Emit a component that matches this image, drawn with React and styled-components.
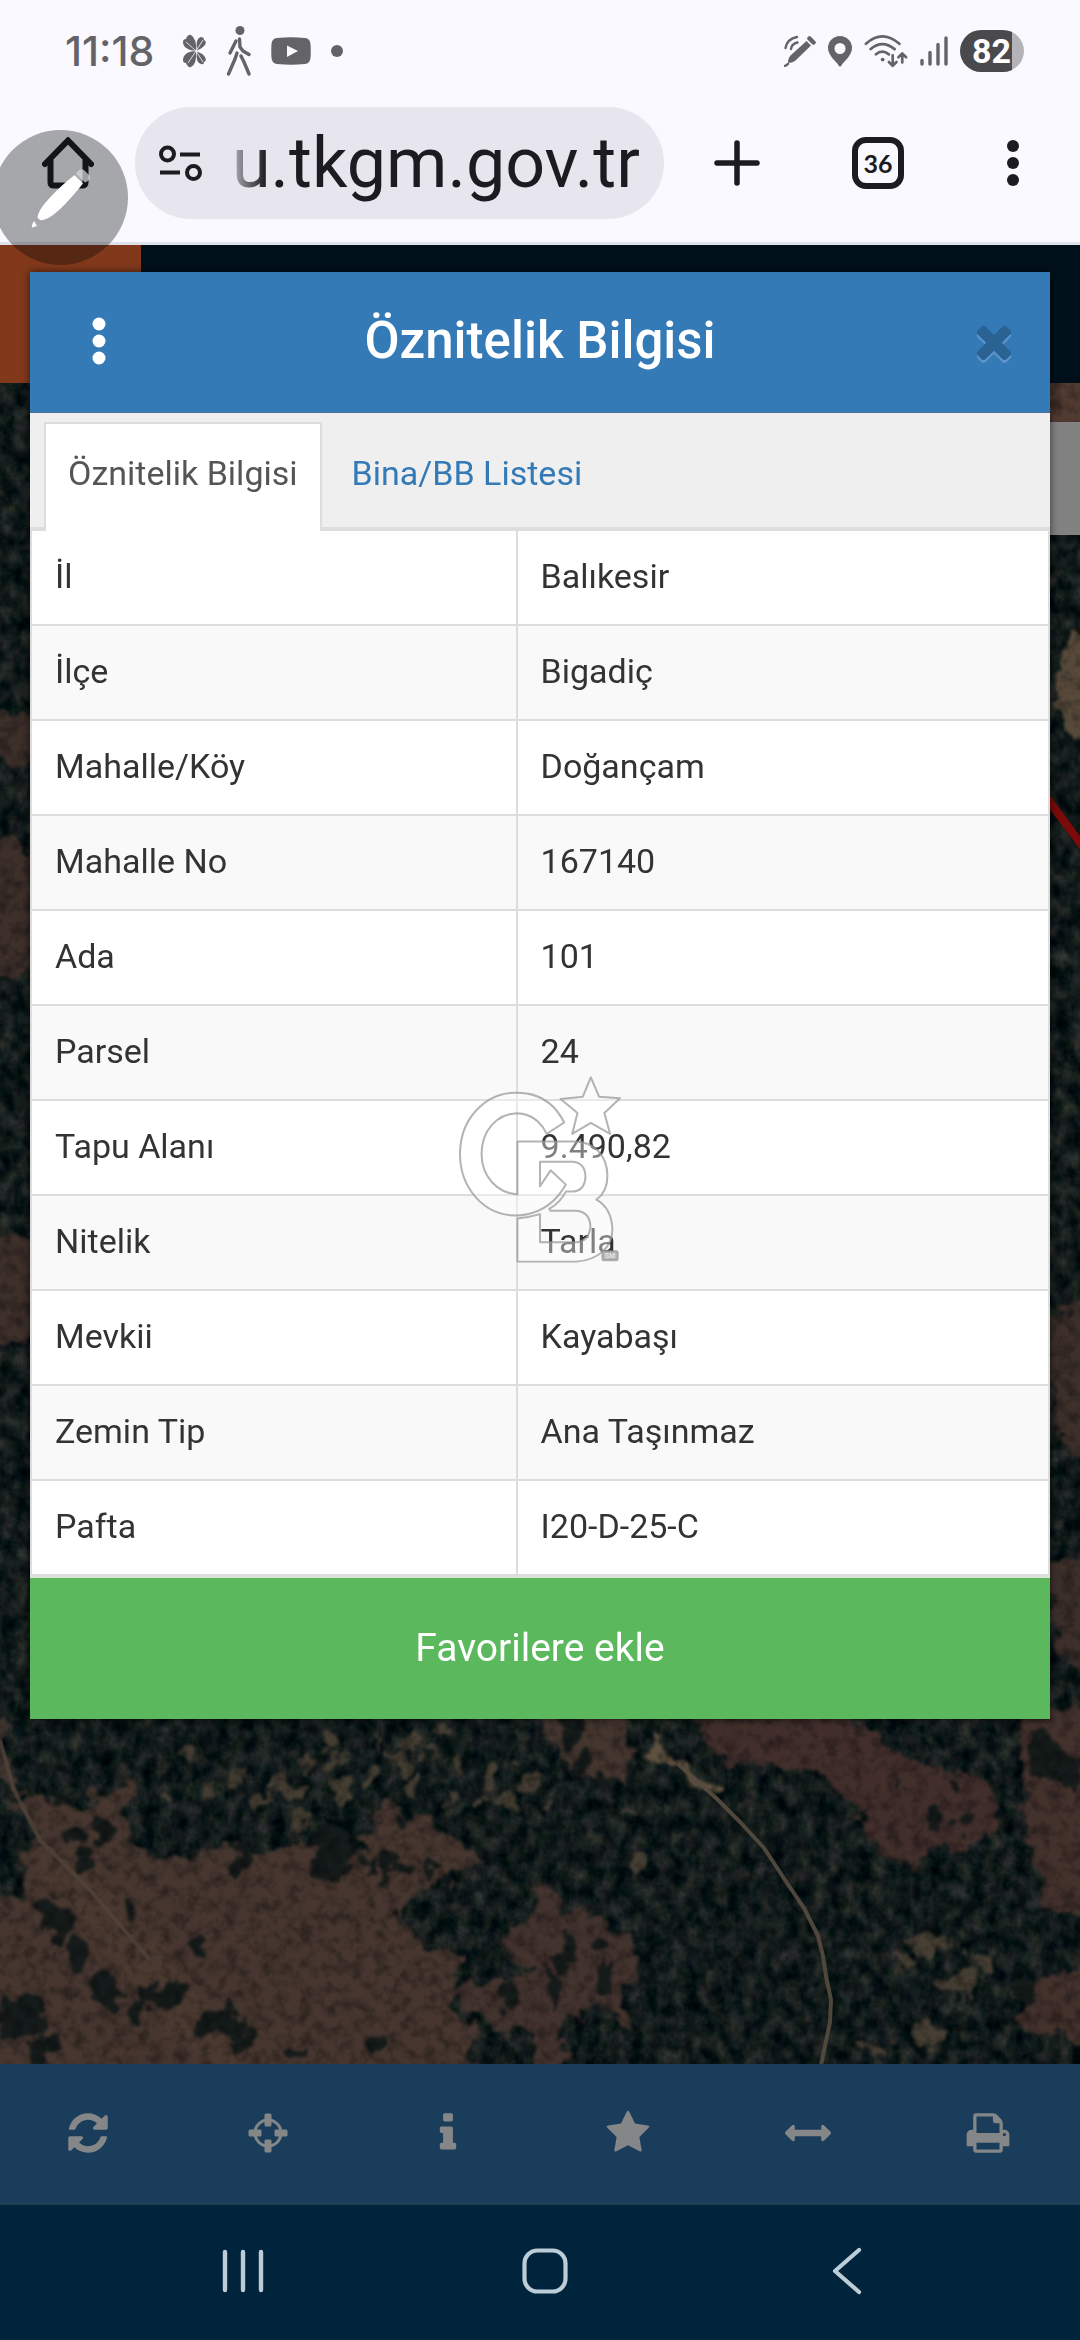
import React from "react";
import styled, { createGlobalStyle } from "styled-components";

const GlobalStyle = createGlobalStyle`
  *, *::before, *::after { box-sizing: border-box; }
  body {
    margin: 0;
    background: #00243c;
    font-family: Roboto, "Liberation Sans", sans-serif;
  }
  button, input { font: inherit; color: inherit; }
  svg { display: block; flex: none; }
`;

const Screen = styled.div`
  position: relative;
  display: flex;
  flex-direction: column;
  min-height: 100vh;
  overflow: hidden;
`;

const IconButton = styled.button`
  display: flex;
  align-items: center;
  justify-content: center;
  padding: 0;
  border: 0;
  background: none;
  cursor: pointer;
`;

/* ---------- phone status bar ---------- */

const StatusBar = styled.div`
  display: flex;
  align-items: center;
  justify-content: space-between;
  height: 84px;
  padding: 18px 56px 0 65px;
  background: #faf9ff;
  color: #646468;
`;

const StatusGroup = styled.div`
  display: flex;
  align-items: center;
  gap: ${(p) => p.$gap}px;
`;

const Clock = styled.time`
  padding-right: 8px;
  font: 500 41px/50px Inter, Roboto, sans-serif;
`;

const Battery = styled.div`
  width: 64px;
  height: 42px;
  padding-left: 12px;
  border-radius: 21px;
  background: linear-gradient(90deg, #4a4a4c 52px, #b4b3b8 52px);
  color: #fff;
  font-size: 34px;
  font-weight: 700;
  line-height: 42px;
`;

/* ---------- browser bar ---------- */

const BrowserBar = styled.header`
  display: flex;
  align-items: center;
  height: 161px;
  border-bottom: 3px solid #dfe2ea;
  background: #faf9ff;
  color: #1b1b20;
`;

const BarButton = styled(IconButton)`
  flex: none;
  width: ${(p) => p.$width}px;
  height: 112px;
`;

const AddressPill = styled.label`
  display: flex;
  flex: 1;
  align-items: center;
  gap: 24px;
  min-width: 0;
  height: 112px;
  padding: 0 8px 0 24px;
  border-radius: 56px;
  background: #e7e5ee;
`;

const AddressInput = styled.input`
  flex: 1;
  min-width: 0;
  height: 96px;
  padding: 0 0 0 6px;
  border: 0;
  outline: 0;
  background: none;
  font-size: 70px;
  line-height: 96px;
  mask-image: linear-gradient(90deg, rgba(0, 0, 0, 0.3) 8px, #000 40px);
`;

const TabCount = styled.span`
  display: flex;
  align-items: center;
  justify-content: center;
  width: 52px;
  height: 52px;
  border: 6px solid #1b1b20;
  border-radius: 14px;
  font: 700 25px/28px Lato, Roboto, sans-serif;
`;

const PenBubble = styled(IconButton)`
  position: absolute;
  top: 130px;
  left: -7px;
  width: 135px;
  height: 135px;
  border-radius: 50%;
  background: rgba(4, 8, 8, 0.34);
`;

/* ---------- map page ---------- */

const Page = styled.main`
  display: grid;
  flex: 1;
  grid-template: minmax(0, 1fr) / minmax(0, 1fr);
`;

const Backdrop = styled.div`
  display: flex;
  flex-direction: column;
  grid-area: 1 / 1;
`;

const SiteHeader = styled.div`
  height: 138px;
  background: linear-gradient(90deg, #82391b 141px, #00101b 141px);
`;

const MapArea = styled.div`
  position: relative;
  flex: 1;
  overflow: hidden;
  background: #151e1d;
`;

const MapPicture = styled.svg`
  position: absolute;
  inset: 0;
  width: 100%;
  height: 100%;
`;

const SidePanelHandle = styled.div`
  position: absolute;
  top: 39px;
  right: 0;
  width: 120px;
  height: 113px;
  background: #828282;
`;

/* ---------- dialog ---------- */

const Dialog = styled.section`
  z-index: 1;
  grid-area: 1 / 1;
  align-self: start;
  margin: 27px 30px 0;
  background: #fff;
  box-shadow: 0 0 8px rgba(0, 0, 0, 0.6);
  color: #333;
  font-size: 34px;
  line-height: 47px;
`;

const DialogHeader = styled.div`
  display: grid;
  grid-template-columns: 1fr auto 1fr;
  align-items: center;
  height: 141px;
  padding: 0 30px 2px;
  border-bottom: 1px solid #4a7396;
  background: #337ab7;
  color: #fff;
`;

const DialogTitle = styled.h1`
  margin: 0;
  font-size: 51px;
  font-weight: 500;
  line-height: 60px;
`;

const HeaderButton = styled(IconButton)`
  justify-self: ${(p) => p.$side};
  width: ${(p) => p.$width}px;
  height: 60px;
`;

const TabList = styled.div`
  display: flex;
  gap: 6px;
  height: 116px;
  padding: 9px 14px 0;
  border-bottom: 2px solid #ddd;
  background: #efefef;
`;

const Tab = styled.button`
  height: 109px;
  padding: 0 22px 8px;
  border: 2px solid ${(p) => (p.$active ? "#ddd" : "transparent")};
  border-bottom: 0;
  background: ${(p) => (p.$active ? "#fff" : "none")};
  color: ${(p) => (p.$active ? "#555" : "#337ab7")};
  cursor: pointer;
`;

const InfoTable = styled.table`
  width: 100%;
  border-collapse: collapse;
  table-layout: fixed;
`;

const InfoRow = styled.tr`
  &:nth-child(even) { background: #f9f9f9; }
`;

const cell = `
  padding: 22px 23px 24px;
  border: 2px solid #ddd;
  font-weight: 400;
  text-align: left;
`;

const NameCell = styled.th`
  ${cell}
  width: 47.7%;
`;

const ValueCell = styled.td`
  ${cell}
`;

const FavoriteButton = styled.button`
  display: block;
  width: 100%;
  height: 143px;
  padding: 0;
  border: 0;
  border-top: 2px solid #d9e5d2;
  background: #5cb85c;
  color: #fff;
  font-size: 39px;
  cursor: pointer;
`;

const Watermark = styled.svg`
  position: absolute;
  z-index: 2;
  top: 50%;
  left: 50%;
  width: 162px;
  height: 188px;
  transform: translate(-50%, -50%);
  pointer-events: none;
`;

/* ---------- bottom bars ---------- */

const MapToolbar = styled.nav`
  display: grid;
  grid-template-columns: repeat(6, 1fr);
  height: 141px;
  border-bottom: 3px solid #1d4257;
  background: #1a3d5c;
  color: #858687;
`;

const ToolButton = styled(IconButton)`
  padding-right: 5px;
`;

const PhoneNav = styled.nav`
  display: grid;
  grid-template-columns: repeat(3, 302px);
  justify-content: center;
  height: 135px;
  padding: 0 0 4px 10px;
  background: #00243c;
  color: #bccdd8;
`;

/* ---------- drawings ---------- */

const AwesomeIcon = ({ size, d, ...rest }) => (
  <svg width={size} height={size} viewBox="0 0 1792 1792" fill="currentColor" aria-hidden="true" {...rest}>
    <path d={d} />
  </svg>
);

const PATHS = {
  refresh:
    "M1639 1056q0 5-1 7-64 268-268 434.5t-478 166.5q-146 0-282.5-55t-243.5-157l-129 129q-19 19-45 19t-45-19-19-45v-448q0-26 19-45t45-19h448q26 0 45 19t19 45-19 45l-137 137q71 66 161 102t187 36q134 0 250-65t186-179q11-17 53-117 8-23 30-23h192q13 0 22.5 9.5t9.5 22.5zm25-800v448q0 26-19 45t-45 19h-448q-26 0-45-19t-19-45 19-45l138-138q-148-137-349-137-134 0-250 65t-186 179q-11 17-53 117-8 23-30 23h-199q-13 0-22.5-9.5t-9.5-22.5v-7q65-268 270-434.5t480-166.5q146 0 284 55.5t245 156.5l130-129q19-19 45-19t45 19 19 45z",
  info: "M1216 1344v128q0 26-19 45t-45 19h-512q-26 0-45-19t-19-45v-128q0-26 19-45t45-19h64v-384h-64q-26 0-45-19t-19-45v-128q0-26 19-45t45-19h384q26 0 45 19t19 45v576h64q26 0 45 19t19 45zm-128-1152v192q0 26-19 45t-45 19h-256q-26 0-45-19t-19-45v-192q0-26 19-45t45-19h256q26 0 45 19t19 45z",
  star: "M1728 647q0 22-26 48l-363 354 86 500q1 7 1 20 0 21-10.5 35.5t-30.5 14.5q-19 0-40-12l-449-236-449 236q-22 12-40 12-21 0-31.5-14.5t-10.5-35.5q0-6 2-20l86-500-364-354q-25-27-25-48 0-37 56-46l502-73 225-455q19-41 49-41t49 41l225 455 502 73q56 9 56 46z",
  arrows:
    "M1792 896q0 26-19 45l-256 256q-19 19-45 19t-45-19-19-45v-128h-1024v128q0 26-19 45t-45 19-45-19l-256-256q-19-19-19-45t19-45l256-256q19-19 45-19t45 19 19 45v128h1024v-128q0-26 19-45t45-19 45 19l256 256q19 19 19 45z",
  print:
    "M448 1536h896v-256h-896v256zm0-640h896v-384h-160q-40 0-68-28t-28-68v-160h-640v640zm1152 64q0-26-19-45t-45-19-45 19-19 45 19 45 45 19 45-19 19-45zm128 0v416q0 13-9.5 22.5t-22.5 9.5h-224v160q0 40-28 68t-68 28h-960q-40 0-68-28t-28-68v-160h-224q-13 0-22.5-9.5t-9.5-22.5v-416q0-79 56.5-135.5t135.5-56.5h64v-544q0-40 28-68t68-28h672q40 0 88 20t76 48l152 152q28 28 48 76t20 88v256h64q79 0 135.5 56.5t56.5 135.5z",
  times:
    "M1490 1322q0 40-28 68l-136 136q-28 28-68 28t-68-28l-294-294-294 294q-28 28-68 28t-68-28l-136-136q-28-28-28-68t28-68l294-294-294-294q-28-28-28-68t28-68l136-136q28-28 68-28t68 28l294 294 294-294q28-28 68-28t68 28l136 136q28 28 28 68t-28 68l-294 294 294 294q28 28 28 68z",
};

const CrosshairIcon = () => (
  <svg width="40" height="40" viewBox="0 0 40 40" aria-hidden="true">
    <circle cx="20" cy="20" r="13" fill="none" stroke="currentColor" strokeWidth="3" />
    <g fill="currentColor">
      <rect x="16.5" y="0.5" width="7" height="13" rx="1.5" />
      <rect x="16.5" y="26.5" width="7" height="13" rx="1.5" />
      <rect x="0.5" y="16.5" width="13" height="7" rx="1.5" />
      <rect x="26.5" y="16.5" width="13" height="7" rx="1.5" />
    </g>
  </svg>
);

const CloverIcon = () => (
  <svg width="24" height="34" viewBox="0 0 24 34" aria-hidden="true">
    <g fill="currentColor">
      <path d="M14 16.500C8 17 1 14 1 8Q1 5 4 5Q6 0 9 1Q15 5 14 16.500z" />
      <path d="M14 17.500C8 16 1 20 1 26Q1 29 4 29Q6 34 9 33Q15 30 14 17.500z" />
      <path d="M15 16.500C14 9 15 4 19 3Q22 3 22 6Q25 7 23 11Q20 15 15 16.500z" />
      <path d="M15 17.500C14 25 15 29 19 30Q22 31 22 28Q25 27 23 23Q20 19 15 17.500z" />
    </g>
    <path d="M4 8L14 17L21 6M6 29L14 17L21 28" fill="none" stroke="#faf9ff" strokeWidth=".8" />
  </svg>
);

const WalkerIcon = () => (
  <svg width="25" height="50" viewBox="0 0 25 50" aria-hidden="true">
    <circle cx="14" cy="4.5" r="4.5" fill="currentColor" />
    <g fill="none" stroke="currentColor" strokeWidth="3.4" strokeLinecap="round" strokeLinejoin="round">
      <path d="M13.5 13L14 21L17 25L23 28.500" />
      <path d="M10 15L7 21L4 27" />
      <path d="M11 27L9 33L2.500 48" />
      <path d="M15 30L18 36L23 48" />
    </g>
  </svg>
);

const YoutubeIcon = () => (
  <svg width="40" height="28" viewBox="0 0 40 28" aria-hidden="true">
    <path d="M6 1Q20-.6 34 1Q39 1.500 39.500 7Q40 14 39.500 21Q39 26.500 34 27Q20 28.500 6 27Q1 26.500.5 21Q0 14 .5 7Q1 1.500 6 1z" fill="currentColor" />
    <path d="M16 8.500L27 14L16 20z" fill="#faf9ff" />
  </svg>
);

const DotIcon = () => (
  <svg width="12" height="12" viewBox="0 0 12 12" aria-hidden="true">
    <circle cx="6" cy="6" r="6" fill="currentColor" />
  </svg>
);

const StylusIcon = () => (
  <svg width="32" height="32" viewBox="0 0 32 32" aria-hidden="true">
    <path d="M22.500 6L27 10.500L11 26Q8 28 4 28Q4 23 6.500 20.500z" fill="currentColor" />
    <path d="M25.500 3.500L29.500 7.500" stroke="currentColor" strokeWidth="4.500" strokeLinecap="round" />
    <path d="M1 31L4 29" stroke="currentColor" strokeWidth="2.500" strokeLinecap="round" />
    <path d="M1.500 13Q3 4 13 2M7 14Q7.500 9 13.500 7.500" fill="none" stroke="currentColor" strokeWidth="2.400" strokeLinecap="round" />
  </svg>
);

const PinIcon = () => (
  <svg width="24" height="31" viewBox="0 0 24 31" aria-hidden="true">
    <path fillRule="evenodd" fill="currentColor" d="M12 0A12 12 0 0 1 24 12Q24 18 17 25Q14 28 13.500 29.500Q12 31.500 10.500 29.500Q10 28 7 25Q0 18 0 12A12 12 0 0 1 12 0zM12 7A5.500 5.500 0 1 0 12 18A5.500 5.500 0 1 0 12 7z" />
  </svg>
);

const WifiIcon = () => (
  <svg width="44" height="34" viewBox="0 0 46 34" aria-hidden="true">
    <g fill="none" stroke="currentColor" strokeWidth="2.800" strokeLinecap="round" strokeLinejoin="round">
      <path d="M2 9.500Q19-6 37 9.500M7 15Q19 4.500 32 15M12.500 20.500Q19 15 26 20.500" />
      <path d="M30 21.500V32M26 28.500L30 32.500L34 28.500" />
      <path d="M40 29V20M36 23.500L40 19.500L44 23.500" />
    </g>
    <circle cx="19.500" cy="26" r="2" fill="currentColor" />
  </svg>
);

const SignalIcon = () => (
  <svg width="28" height="30" viewBox="0 0 28 30" aria-hidden="true">
    <path d="M2 24.500V28M10 16.500V28M18 8.500V28M26 2V28" stroke="currentColor" strokeWidth="3.400" strokeLinecap="round" />
  </svg>
);

const HomeIcon = () => (
  <svg width="52" height="52" viewBox="0 0 52 52" fill="none" stroke="currentColor" strokeWidth="6" strokeLinejoin="round" aria-hidden="true">
    <path d="M3 27L26 3.500L49 27" strokeLinecap="round" strokeLinejoin="miter" />
    <path d="M8.500 23V45.500Q8.500 48.500 12 48.500H40Q43.500 48.500 43.500 45.500V23" />
  </svg>
);

const SiteSettingsIcon = () => (
  <svg width="43" height="37" viewBox="0 0 43 37" fill="none" stroke="currentColor" strokeWidth="4" aria-hidden="true">
    <circle cx="8.500" cy="9" r="6.500" />
    <path d="M21 9.500H41M1 27.500H21" />
    <circle cx="34.500" cy="27.500" r="6.500" />
  </svg>
);

const PlusIcon = () => (
  <svg width="46" height="46" viewBox="0 0 46 46" aria-hidden="true">
    <path d="M23 3V43M3 23H43" stroke="currentColor" strokeWidth="5.500" strokeLinecap="round" />
  </svg>
);

const DotsIcon = ({ step, r }) => (
  <svg width="14" height="48" viewBox="0 0 14 48" fill="currentColor" aria-hidden="true">
    <circle cx="7" cy={24 - step} r={r} />
    <circle cx="7" cy="24" r={r} />
    <circle cx="7" cy={24 + step} r={r} />
  </svg>
);

const PenIcon = () => (
  <svg width="60" height="60" viewBox="0 0 60 60" aria-hidden="true">
    <path d="M43.500 7L52 15.500Q34 38 22 47Q14 53 9 52L6.500 49.500Q7 43 15 34Q27 20 43.500 7z" fill="#fff" />
    <path d="M46 4Q49 0 53 2L57 6Q61 10 57 13L54 14.500L45 6z" fill="#dcdce0" opacity=".7" />
    <path d="M3 53L6 58L1 59.500Q0 58 3 53z" fill="#fff" />
  </svg>
);

const RecentsIcon = () => (
  <svg width="42" height="46" viewBox="0 0 42 46" aria-hidden="true">
    <path d="M3 4V42M21 4V42M39 4V42" stroke="currentColor" strokeWidth="4.400" strokeLinecap="round" />
  </svg>
);

const NavHomeIcon = () => (
  <svg width="46" height="46" viewBox="0 0 46 46" aria-hidden="true">
    <rect x="2.500" y="2.500" width="41" height="41" rx="13" fill="none" stroke="currentColor" strokeWidth="4.200" />
  </svg>
);

const NavBackIcon = () => (
  <svg width="30" height="48" viewBox="0 0 30 48" aria-hidden="true">
    <path d="M27 3L3 24L27 45" fill="none" stroke="currentColor" strokeWidth="4.200" strokeLinecap="round" strokeLinejoin="round" />
  </svg>
);

const TREES = [
  [75, 1080, 24, 55], [90, 1150, 12, 40], [115, 1210, 13, 40], [150, 1300, 22, 60], [190, 1085, 9, 28],
  [290, 1185, 11, 32], [235, 1320, 38, 38], [320, 1400, 34, 44], [350, 1460, 12, 30], [550, 1465, 10, 35],
  [435, 1495, 12, 25], [130, 930, 13, 40], [105, 860, 14, 26], [95, 765, 15, 20], [150, 850, 12, 30],
  [480, 910, 32, 75], [570, 940, 18, 34], [630, 960, 14, 26], [585, 810, 14, 24], [350, 925, 12, 40],
  [535, 935, 10, 25], [560, 990, 10, 22], [740, 1320, 12, 40], [820, 1200, 14, 46], [880, 1270, 14, 44],
  [805, 1310, 12, 60], [875, 1165, 10, 24], [1355, 800, 14, 34], [1398, 825, 14, 32], [1392, 715, 9, 22],
  [1303, 700, 7, 22], [1520, 620, 20, 70], [1545, 680, 22, 60], [830, 555, 18, 40], [870, 690, 14, 30],
  [200, 1380, 14, 34], [30, 1380, 40, 60], [60, 1480, 20, 50], [1495, 1310, 16, 44], [840, 650, 10, 20],
];

const SCRUB = [
  [475, 580, 12, 24], [485, 640, 8, 28], [595, 590, 8, 34], [580, 645, 12, 30], [345, 680, 10, 26],
  [415, 730, 20, 30], [490, 720, 26, 26], [600, 700, 10, 34], [710, 690, 12, 34], [730, 750, 26, 12],
  [655, 750, 8, 30], [440, 800, 10, 30], [380, 760, 10, 20], [910, 805, 12, 8], [925, 950, 12, 30],
  [700, 780, 10, 16], [620, 620, 8, 20], [1350, 1180, 20, 30], [1390, 1290, 34, 26], [1310, 1210, 10, 26],
  [1350, 1440, 20, 30], [1270, 1470, 18, 18], [790, 780, 10, 20], [270, 620, 12, 16],
  [640, 560, 8, 20], [670, 650, 7, 26], [535, 690, 9, 24], [560, 600, 6, 20], [450, 650, 8, 18],
  [240, 760, 7, 20], [300, 740, 8, 18], [770, 700, 8, 20], [750, 640, 6, 18], [1420, 1220, 12, 22],
];

const SatelliteMap = () => (
  <MapPicture viewBox="0 383 1080 1681" preserveAspectRatio="xMidYMin slice" aria-hidden="true">
    <defs>
      <filter id="rough" x="-5%" y="-5%" width="110%" height="110%" colorInterpolationFilters="sRGB">
        <feTurbulence type="fractalNoise" baseFrequency="0.045" numOctaves="4" seed="8" result="n" />
        <feDisplacementMap in="SourceGraphic" in2="n" scale="36" xChannelSelector="R" yChannelSelector="G" />
        <feGaussianBlur stdDeviation="1.400" />
      </filter>
      <filter id="canopy" x="0" y="0" width="100%" height="100%" colorInterpolationFilters="sRGB">
        <feTurbulence type="fractalNoise" baseFrequency="0.07 0.06" numOctaves="4" seed="3" />
        <feColorMatrix values="0.34 0 0 0 -0.095  0.26 0.04 0 0 -0.038  0.22 0 0.04 0 -0.02  0 0 0 0 1" />
      </filter>
      <filter id="grain" x="0" y="0" width="100%" height="100%" colorInterpolationFilters="sRGB">
        <feTurbulence type="fractalNoise" baseFrequency="0.08" numOctaves="3" seed="21" />
        <feColorMatrix values="0 0 0 0 0  0 0 0 0 0.01  0 0 0 0 0.02  2.4 0 0 0 -1" />
      </filter>
    </defs>
    <rect y="383" width="1080" height="1681" filter="url(#canopy)" />
    <g filter="url(#rough)">
      <g fill="#3d2f2a">
        <path d="M1040 360H1110V430H1040z" fill="#503a31" />
        <path d="M1068 640L1100 630V740L1068 730L1052 700z" fill="#584a3b" />
        <path d="M1040 1318L1100 1300V1470L1060 1440z" />
        <path d="M1040 1560H1100V1680L1060 1650z" />
        <path d="M-20 705L50 725V765L-20 750zM-20 842L20 842L50 900L30 970L-20 976z" />
        <path d="M-20 1240L40 1235V1330L-20 1370z" />
      </g>
      <g transform="translate(0 1540) scale(.6887 .3444)">
        <path fill="#46362f" d="M20 770L60 740L120 770L190 690L185 870L230 950L330 880L400 930L440 850L460 960L520 900L560 770L620 800L650 870L700 930L640 1000L590 1020L575 1110L620 1185L675 1200L650 1260L660 1380L690 1430L670 1580H-40V1040L40 1050L35 930L50 850z" />
        <path fill="#4b3a31" opacity=".7" d="M40 900L110 900L230 1180L380 1560L300 1540L180 1260L90 1080z" />
        <path fill="#422f2c" d="M1000 490H1230L1290 600L1350 680L1440 690L1450 840L1400 890L1350 900L1330 965L1270 860L1220 730L1205 680L1060 640L1030 600z" />
        <path fill="#43312c" d="M1475 490H1600V1110L1520 1070L1495 870L1490 750zM1470 1400L1500 1270L1600 1260V1450L1510 1440z" />
        <path fill="#45362f" d="M770 490H900L920 620L910 710L850 690L820 620z" />
        <path fill="#43332e" d="M780 1000L800 1010L810 1080L840 1060L880 1130L915 1160L920 1250L900 1350L925 1440L900 1400L860 1340L810 1440L810 1580H770L780 1440L720 1430L700 1380L650 1310L690 1270L720 1300L780 1240L740 1200L735 1140L780 1110z" />
        <path fill="#413630" d="M-20 490L8 520L20 700L45 760L0 700z" />
        <g fill="#4f4538" opacity=".85">
          {SCRUB.map(([x, y, rx, ry]) => (
            <ellipse key={`${x}-${y}`} cx={x} cy={y} rx={rx} ry={ry} />
          ))}
        </g>
        <g fill="#151b1a">
          {TREES.map(([x, y, rx, ry]) => (
            <ellipse key={`${x}-${y}`} cx={x} cy={y} rx={rx} ry={ry} />
          ))}
        </g>
        <path fill="#5f5140" d="M945 530L960 600L985 640L1045 735L1025 740L980 660L935 640z" />
      </g>
    </g>
    <rect y="383" width="1080" height="1681" filter="url(#grain)" opacity=".35" />
    <g fill="none" strokeLinejoin="round">
      <path d="M678 1764L716 1798L740 1822L764 1848L785 1880L804 1908L818 1936L823 1956L826 1976L831 2000L830 2022L820 2070" stroke="#564b40" strokeWidth="4" opacity=".9" />
      <path d="M0 1740L14 1790L40 1840L90 1890L150 1960" stroke="#51443a" strokeWidth="4" opacity=".7" />
      <path d="M1040 789L1090 856" stroke="#7c0a0a" strokeWidth="8" />
    </g>
  </MapPicture>
);

const AgencyMark = () => (
  <Watermark viewBox="86 77 488 564" aria-hidden="true">
    <g fill="rgba(255,255,255,.38)" stroke="#969696" strokeOpacity=".72" strokeWidth="6" strokeLinejoin="round">
      <path d="M403 216Q358 126 258 126C160 126 89 210 89 311C89 412 160 496 258 496Q356 494 408 403L362 360L330 408V334H430Q466 338 467 379Q465 421 430 424H408Q392 456 358 476L362 482H440Q480 486 482 529Q478 575 438 577H330V492Q296 502 262 505V635H440C505 630 548 592 548 538Q546 474 500 448Q534 424 533 374C532 315 492 274 436 273H262V433C200 428 154 378 154 311C154 240 200 190 260 188Q322 190 350 250z" />
      <path d="M483 80L508 138L571 143L524 187L541 250L483 217L427 250L443 187L392 145L459 138z" />
      <rect x="518" y="604" width="46" height="27" rx="4" fill="#b8b8b8" />
    </g>
    <text x="541" y="625" textAnchor="middle" fontFamily="Roboto, sans-serif" fontSize="20" fontWeight="700" fill="#e4e4e4">SM</text>
  </Watermark>
);

/* ---------- data ---------- */

const ATTRIBUTES = [
  ["İl", "Balıkesir"],
  ["İlçe", "Bigadiç"],
  ["Mahalle/Köy", "Doğançam"],
  ["Mahalle No", "167140"],
  ["Ada", "101"],
  ["Parsel", "24"],
  ["Tapu Alanı", "9.490,82"],
  ["Nitelik", "Tarla"],
  ["Mevkii", "Kayabaşı"],
  ["Zemin Tip", "Ana Taşınmaz"],
  ["Pafta", "I20-D-25-C"],
];

const TOOLS = [
  ["Yenile", <AwesomeIcon size={46} d={PATHS.refresh} />],
  ["Konum", <CrosshairIcon />],
  ["Bilgi", <AwesomeIcon size={46} d={PATHS.info} />],
  ["Favoriler", <AwesomeIcon size={46} d={PATHS.star} />],
  ["Ölçüm", <AwesomeIcon size={46} d={PATHS.arrows} />],
  ["Yazdır", <AwesomeIcon size={46} d={PATHS.print} />],
];

const CloseIcon = styled(AwesomeIcon)`
  color: #2a6294;
  filter: drop-shadow(0 3px 0 #5c95ca);
`;

export default function App() {
  return (
    <Screen lang="tr">
      <GlobalStyle />
      <StatusBar>
        <StatusGroup $gap={20}>
          <Clock>11:18</Clock>
          <CloverIcon />
          <WalkerIcon />
          <YoutubeIcon />
          <DotIcon />
        </StatusGroup>
        <StatusGroup $gap={12}>
          <StylusIcon />
          <PinIcon />
          <WifiIcon />
          <SignalIcon />
          <Battery>82</Battery>
        </StatusGroup>
      </StatusBar>

      <BrowserBar>
        <BarButton type="button" $width={135} aria-label="Ana sayfa">
          <HomeIcon />
        </BarButton>
        <AddressPill>
          <SiteSettingsIcon />
          <AddressInput type="text" aria-label="Adres" defaultValue="u.tkgm.gov.tr" />
        </AddressPill>
        <BarButton type="button" $width={146} aria-label="Yeni sekme">
          <PlusIcon />
        </BarButton>
        <BarButton type="button" $width={136} aria-label="Sekmeler">
          <TabCount>36</TabCount>
        </BarButton>
        <BarButton type="button" $width={134} aria-label="Menü">
          <DotsIcon step={17} r={6} />
        </BarButton>
      </BrowserBar>

      <Page>
        <Backdrop>
          <SiteHeader />
          <MapArea>
            <SatelliteMap />
            <SidePanelHandle />
          </MapArea>
        </Backdrop>

        <Dialog role="dialog" aria-labelledby="dialog-title">
          <DialogHeader>
            <HeaderButton type="button" $side="start" $width={78} aria-label="Seçenekler">
              <DotsIcon step={17} r={6.5} />
            </HeaderButton>
            <DialogTitle id="dialog-title">Öznitelik Bilgisi</DialogTitle>
            <HeaderButton type="button" $side="end" $width={52} aria-label="Kapat">
              <CloseIcon size={52} d={PATHS.times} />
            </HeaderButton>
          </DialogHeader>
          <TabList role="tablist">
            <Tab type="button" role="tab" aria-selected="true" $active>
              Öznitelik Bilgisi
            </Tab>
            <Tab type="button" role="tab" aria-selected="false">
              Bina/BB Listesi
            </Tab>
          </TabList>
          <InfoTable>
            <tbody>
              {ATTRIBUTES.map(([name, value]) => (
                <InfoRow key={name}>
                  <NameCell scope="row">{name}</NameCell>
                  <ValueCell>{value}</ValueCell>
                </InfoRow>
              ))}
            </tbody>
          </InfoTable>
          <FavoriteButton type="button">Favorilere ekle</FavoriteButton>
        </Dialog>
      </Page>

      <MapToolbar aria-label="Harita araçları">
        {TOOLS.map(([label, icon]) => (
          <ToolButton key={label} type="button" aria-label={label}>
            {icon}
          </ToolButton>
        ))}
      </MapToolbar>

      <PhoneNav aria-label="Telefon">
        <IconButton type="button" aria-label="Son uygulamalar">
          <RecentsIcon />
        </IconButton>
        <IconButton type="button" aria-label="Ana ekran">
          <NavHomeIcon />
        </IconButton>
        <IconButton type="button" aria-label="Geri">
          <NavBackIcon />
        </IconButton>
      </PhoneNav>

      <AgencyMark />
      <PenBubble type="button" aria-label="Kalem">
        <PenIcon />
      </PenBubble>
    </Screen>
  );
}
